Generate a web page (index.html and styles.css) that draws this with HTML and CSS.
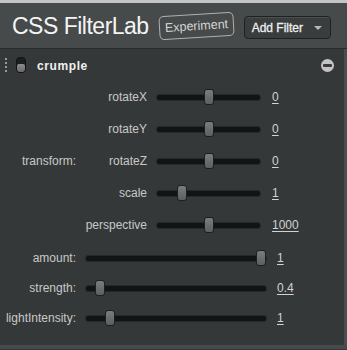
FILE: index.html
```html
<!DOCTYPE html>
<html>
<head>
<meta charset="utf-8">
<link rel="stylesheet" href="styles.css">
</head>
<body>
<div class="strip"></div>
<header class="header">
  <h1 class="title">CSS FilterLab</h1>
  <span class="badge">Experiment</span>
  <button class="add-btn"><span>Add Filter</span><span class="caret"></span></button>
</header>
<main class="panel">
  <div class="filter-head">
    <span class="grip"></span>
    <span class="toggle"><span class="knob"></span></span>
    <span class="filter-name">crumple</span>
    <span class="remove"><span class="bar"></span></span>
  </div>
  <div class="group">
    <div class="group-label">transform:</div>
    <div class="group-rows">
      <div class="row sub"><span class="label">rotateX</span><span class="track"><span class="thumb" style="--p:0.505"></span></span><span class="value">0</span></div>
      <div class="row sub"><span class="label">rotateY</span><span class="track"><span class="thumb" style="--p:0.505"></span></span><span class="value">0</span></div>
      <div class="row sub"><span class="label">rotateZ</span><span class="track"><span class="thumb" style="--p:0.505"></span></span><span class="value">0</span></div>
      <div class="row sub"><span class="label">scale</span><span class="track"><span class="thumb" style="--p:0.215"></span></span><span class="value">1</span></div>
      <div class="row sub"><span class="label">perspective</span><span class="track"><span class="thumb" style="--p:0.505"></span></span><span class="value">1000</span></div>
    </div>
  </div>
  <div class="params">
    <div class="row main-row"><span class="label">amount:</span><span class="track"><span class="thumb" style="--p:1"></span></span><span class="value">1</span></div>
    <div class="row main-row"><span class="label">strength:</span><span class="track"><span class="thumb" style="--p:0.053"></span></span><span class="value">0.4</span></div>
    <div class="row main-row"><span class="label">lightIntensity:</span><span class="track"><span class="thumb" style="--p:0.11"></span></span><span class="value">1</span></div>
  </div>
</main>
<div class="footer"></div>
</body>
</html>
```

FILE: styles.css
```css
* { box-sizing: border-box; }
html, body { margin: 0; padding: 0; }
body {
  width: 347px;
  height: 350px;
  overflow: hidden;
  background: #353838;
  font-family: "Liberation Sans", Arial, sans-serif;
  color: #c8c8c8;
}
.strip { height: 3px; background: #c4c4c4; }
.header {
  height: 46px;
  background: #474a4a;
  border-bottom: 1px solid #2a2c2c;
  display: flex;
  align-items: center;
  padding-left: 12px;
}
.title {
  margin: 0;
  font-size: 23px;
  font-weight: normal;
  letter-spacing: -0.5px;
  color: #f4f4f4;
  line-height: 1;
  padding-top: 2px;
}
.badge {
  margin-left: 10px;
  width: 75px;
  text-align: center;
  padding: 4px 0;
  border: 1px solid rgba(210,210,210,0.75);
  border-radius: 5px;
  font-size: 12.5px;
  color: #d4d4d4;
  transform: rotate(-3.5deg);
  line-height: 14px;
  margin-top: 1px;
}
.add-btn {
  margin-left: 10px;
  width: 87px;
  height: 23px;
  margin-top: 4px;
  background: #3a3d3d;
  border: 1px solid #1f2121;
  border-radius: 4px;
  box-shadow: inset 0 1px 0 #4c4f4f;
  display: flex;
  align-items: center;
  justify-content: space-between;
  padding: 0 8px 0 7px;
  font-family: "Liberation Sans", Arial, sans-serif;
  font-size: 12px;
  font-weight: normal;
  -webkit-text-stroke: 0.3px #efefef;
  color: #efefef;
}
.caret {
  width: 0; height: 0;
  border-left: 4px solid transparent;
  border-right: 4px solid transparent;
  border-top: 4px solid #b8b8b8;
}
.panel {
  height: 296px;
  border-right: 3px solid #4a4d4d;
  background: #353838;
}
.filter-head {
  height: 32px;
  display: flex;
  align-items: center;
  padding-left: 5px;
}
.grip {
  width: 2px;
  height: 14px;
  background: repeating-linear-gradient(#9a9a9a 0 2px, transparent 2px 4px);
}
.toggle {
  margin-left: 9px;
  width: 10px;
  height: 16px;
  border-radius: 4px;
  background: #1d1f1f;
  border: 1px solid #121313;
  position: relative;
}
.knob {
  position: absolute;
  left: 0; right: 0; bottom: 0;
  height: 8px;
  border-radius: 2px 2px 3px 3px;
  background: linear-gradient(#8c8c8c, #6a6a6a);
}
.filter-name {
  margin-left: 11px;
  font-size: 12px;
  font-weight: bold;
  letter-spacing: 0.6px;
  color: #f0f0f0;
  padding-top: 2px;
}
.remove {
  margin-left: auto;
  margin-right: 10px;
  width: 13px;
  height: 13px;
  border-radius: 50%;
  background: #c4c4c4;
  display: flex;
  align-items: center;
  justify-content: center;
}
.bar {
  width: 9px;
  height: 3px;
  background: #3a3a3a;
  border-radius: 1px;
}
.group {
  display: flex;
  align-items: center;
}
.group-label {
  width: 76px;
  text-align: right;
  font-size: 12px;
}
.group-rows { display: flex; flex-direction: column; }
.row {
  display: flex;
  align-items: center;
  font-size: 12px;
}
.row.sub { height: 32px; }
.row.sub .label { width: 71px; }
.row.sub .track { width: 103px; }
.row.sub .value { margin-left: 12px; }
.params { margin-top: 2px; }
.row.main-row { height: 30px; }
.row.main-row .label { width: 76px; }
.row.main-row .track { width: 180px; }
.row.main-row .value { margin-left: 11px; }
.label {
  text-align: right;
  color: #c8c8c8;
}
.track {
  margin-left: 10px;
  height: 5px;
  border-radius: 3px;
  background: #121313;
  box-shadow: 0 0 0 1px #262828;
  position: relative;
}
.thumb {
  position: absolute;
  top: -6px;
  left: calc((100% - 10px) * var(--p));
  width: 10px;
  height: 16px;
  border-radius: 3px;
  background: linear-gradient(#7a7d7d, #5c5f5f);
  border: 1px solid #1e2020;
}
.value {
  color: #d2d2d2;
  text-decoration: underline;
  text-underline-offset: 2px;
}
.footer { height: 4px; background: #474a4a; }
```
